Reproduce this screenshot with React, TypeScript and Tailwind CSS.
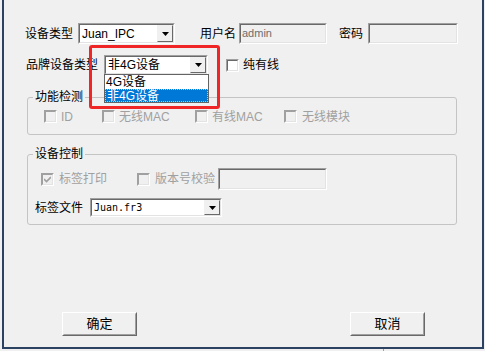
import { FC, ReactNode } from "react";

const Arrow: FC = () => (
  <svg width="7" height="4" viewBox="0 0 7 4">
    <polygon points="0,0 7,0 3.5,4" fill="#000" />
  </svg>
);

const Combo: FC<{ w: string; h: string; text: string; mono?: boolean }> = ({ w, h, text, mono }) => (
  <div className={`${w} ${h} flex border border-t-[#a0a0a0] border-l-[#a0a0a0] border-b-white border-r-white`}>
    <div className="flex flex-1 items-center bg-white border border-t-[#696969] border-l-[#696969] border-b-[#e3e3e3] border-r-[#e3e3e3]">
      <span
        className={`flex-1 pl-[2px] leading-none ${
          mono ? "font-['DejaVu_Sans_Mono',monospace] text-[10px]" : "text-[12px]"
        }`}
      >
        {text}
      </span>
      <div className="w-[16px] h-full flex items-center justify-center bg-[#f0f0f0] border border-t-[#f0f0f0] border-l-[#f0f0f0] border-b-[#696969] border-r-[#696969]">
        <Arrow />
      </div>
    </div>
  </div>
);

const TextBox: FC<{ w: string; h: string; text?: string }> = ({ w, h, text }) => (
  <div className={`${w} ${h} flex border border-t-[#a0a0a0] border-l-[#a0a0a0] border-b-white border-r-white`}>
    <div className="flex-1 flex items-center bg-[#f0f0f0] border border-t-[#696969] border-l-[#696969] border-b-[#e3e3e3] border-r-[#e3e3e3] pl-[1px] text-[11px] text-[#6d6d6d]">
      {text}
    </div>
  </div>
);

const Check: FC<{ disabled?: boolean; checked?: boolean }> = ({ disabled, checked }) => (
  <div className="w-[13px] h-[13px] flex border border-t-[#a0a0a0] border-l-[#a0a0a0] border-b-white border-r-white">
    <div
      className={`flex-1 flex items-center justify-center border ${
        disabled
          ? "bg-[#f0f0f0] border-t-[#a0a0a0] border-l-[#a0a0a0] border-b-[#e3e3e3] border-r-[#e3e3e3]"
          : "bg-white border-t-[#696969] border-l-[#696969] border-b-[#e3e3e3] border-r-[#e3e3e3]"
      }`}
    >
      {checked && (
        <svg width="7" height="7" viewBox="0 0 7 7">
          <path d="M0 3 L2.5 5.5 L7 1" stroke="#a0a0a0" strokeWidth="1.6" fill="none" />
        </svg>
      )}
    </div>
  </div>
);

const Group: FC<{ title: string; h: string; children: ReactNode }> = ({ title, h, children }) => (
  <div className={`relative ml-[23px] w-[430px] ${h} border border-[#c4c4c4] rounded-[3px]`}>
    <span className="absolute top-[-9px] left-[5px] px-[2px] bg-[#f0f0f0] leading-[16px]">{title}</span>
    {children}
  </div>
);

const Button: FC<{ label: string; ml: string }> = ({ label, ml }) => (
  <div className={`${ml} w-[75px] h-[24px] flex border border-t-white border-l-white border-b-[#696969] border-r-[#696969]`}>
    <div className="flex-1 flex items-center justify-center bg-[#f0f0f0] border border-t-[#f0f0f0] border-l-[#f0f0f0] border-b-[#a0a0a0] border-r-[#a0a0a0] text-[13px]">
      {label}
    </div>
  </div>
);

const App: FC = () => {
  return (
    <div className="relative w-[485px] h-[351px] overflow-hidden bg-[#f0f0f0] text-[12px] text-black font-['Liberation_Sans','Noto_Sans_CJK_SC',sans-serif]">
      <div className="ml-[2px] w-[482px] h-[349px] border-l-2 border-r-2 border-b-2 border-[#2b4263]">
        <div className="flex flex-col pt-[23px]">
          <div className="flex items-center h-[21px] pl-[21px]">
            <span className="w-[53px]">设备类型</span>
            <Combo w="w-[97px]" h="h-[21px]" text="Juan_IPC" />
            <span className="ml-[25px] w-[39px]">用户名</span>
            <TextBox w="w-[88px]" h="h-[21px]" text="admin" />
            <span className="ml-[12px] w-[29px]">密码</span>
            <TextBox w="w-[90px]" h="h-[21px]" />
          </div>

          <div className="flex items-center h-[20px] mt-[11px] pl-[22px]">
            <span className="w-[78px]">品牌设备类型</span>
            <Combo w="w-[104px]" h="h-[20px]" text="非4G设备" />
            <div className="ml-[18px]">
              <Check />
            </div>
            <span className="ml-[4px]">纯有线</span>
          </div>

          <div className="mt-[22px]">
            <Group title="功能检测" h="h-[38px]">
              <div className="flex items-center h-[13px] mt-[12px] pl-[16px] text-[#a0a0a0]">
                <div className="flex items-center w-[58px] gap-[4px]">
                  <Check disabled />
                  <span>ID</span>
                </div>
                <div className="flex items-center w-[93px] gap-[4px]">
                  <Check disabled />
                  <span>无线MAC</span>
                </div>
                <div className="flex items-center w-[89px] gap-[4px]">
                  <Check disabled />
                  <span>有线MAC</span>
                </div>
                <div className="flex items-center gap-[5px]">
                  <Check disabled />
                  <span>无线模块</span>
                </div>
              </div>
            </Group>
          </div>

          <div className="mt-[19px]">
            <Group title="设备控制" h="h-[71px]">
              <div className="flex items-center h-[22px] mt-[13px] pl-[13px] text-[#a0a0a0]">
                <div className="flex items-center w-[96px] gap-[5px]">
                  <Check disabled checked />
                  <span>标签打印</span>
                </div>
                <div className="flex items-center gap-[5px]">
                  <Check disabled />
                  <span>版本号校验</span>
                </div>
                <div className="ml-[3px]">
                  <TextBox w="w-[109px]" h="h-[22px]" />
                </div>
              </div>
              <div className="flex items-center h-[19px] mt-[8px] pl-[7px]">
                <span className="w-[55px]">标签文件</span>
                <Combo w="w-[132px]" h="h-[19px]" text="Juan.fr3" mono />
              </div>
            </Group>
          </div>

          <div className="flex mt-[87px]">
            <Button label="确定" ml="ml-[58px]" />
            <Button label="取消" ml="ml-[213px]" />
          </div>
        </div>
      </div>

      <div className="absolute left-[383px] top-[349px] w-px h-[2px] bg-[#a0a0a0]" />

      <div className="absolute left-[104px] top-[74px] w-[105px] h-[29px] bg-white border border-[#646464] flex flex-col">
        <div className="h-[14px] flex items-center pl-[1px] leading-none">4G设备</div>
        <div className="h-[13px] flex items-center pl-[1px] leading-none bg-[#0078d7] text-white border border-dotted border-[#f5c070]">
          非4G设备
        </div>
      </div>

      <div className="absolute left-[89px] top-[45px] w-[131px] h-[64px] border-[3px] border-[#f02626] rounded-[3px]" />
    </div>
  );
};

export default App;
